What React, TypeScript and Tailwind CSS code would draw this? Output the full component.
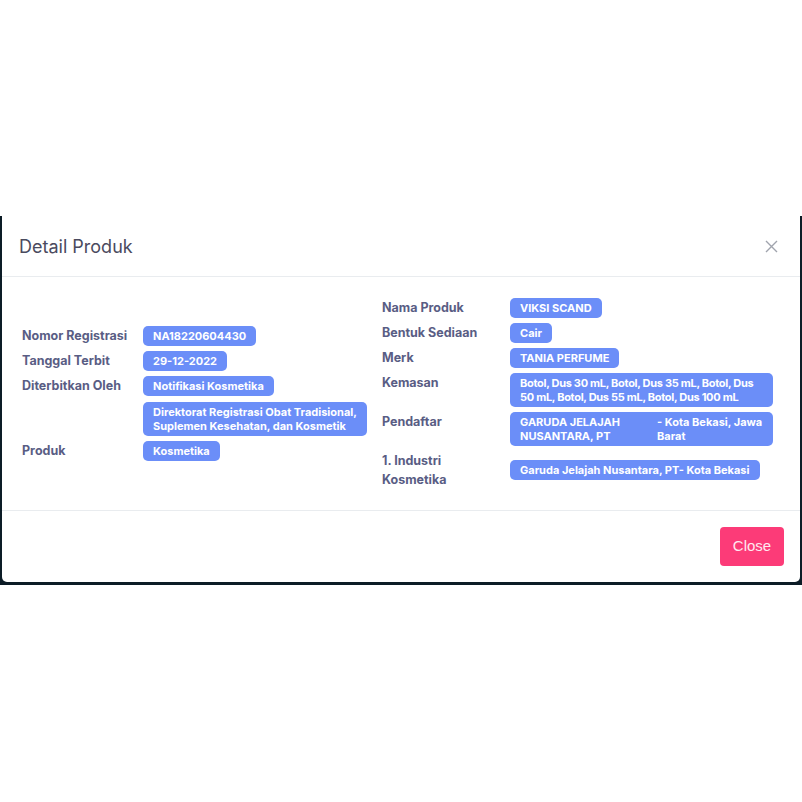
import React from 'react';

const badgeCls =
  'rounded-[5px] bg-[#6b8ef8] px-[10px] py-[3px] text-[11px] font-bold leading-[14px] text-white whitespace-nowrap';

const Badge: React.FC<{ children: React.ReactNode }> = ({ children }) => (
  <div className="flex self-center">
    <span className={badgeCls}>{children}</span>
  </div>
);

const Label: React.FC<{ children: React.ReactNode }> = ({ children }) => (
  <div className="self-start text-[12.5px] font-bold leading-[19px] text-[#595d84]">{children}</div>
);

export default function App() {
  return (
    <div className="min-h-[802px] w-[802px] bg-white font-['Inter',sans-serif]">
      <div className="h-[216px]" />
      <div className="bg-[#0c1c26] px-[2px] pb-[3px]">
        <div className="rounded-b-[5px] bg-white">
          {/* Header */}
          <div className="flex h-[61px] items-center justify-between border-b border-[#e9ecef] pl-[17px] pr-[22px]">
            <h3 className="text-[18px] font-normal text-[#4a4a5e]">Detail Produk</h3>
            <button className="text-[#a0a4ad]">
              <svg width="13" height="13" viewBox="0 0 13 13" fill="none" stroke="currentColor" strokeWidth="1.4">
                <path d="M1 1L12 12M12 1L1 12" />
              </svg>
            </button>
          </div>

          {/* Body */}
          <div className="flex items-center gap-[12px] border-b border-[#e9ecef] pb-[21px] pl-[20px] pr-[25px] pt-[21px]">
            <div className="grid w-[348px] grid-cols-[121px_1fr] gap-y-[5px]">
              <Label>Nomor Registrasi</Label>
              <Badge>NA18220604430</Badge>
              <Label>Tanggal Terbit</Label>
              <Badge>29-12-2022</Badge>
              <Label>Diterbitkan Oleh</Label>
              <div className="flex flex-col items-start gap-[6px]">
                <span className={badgeCls}>Notifikasi Kosmetika</span>
                <span className={badgeCls}>
                  Direktorat Registrasi Obat Tradisional,
                  <br />
                  Suplemen Kesehatan, dan Kosmetik
                </span>
              </div>
              <Label>Produk</Label>
              <Badge>Kosmetika</Badge>
            </div>

            <div className="grid flex-1 grid-cols-[128px_1fr] gap-y-[5px]">
              <Label>Nama Produk</Label>
              <Badge>VIKSI SCAND</Badge>
              <Label>Bentuk Sediaan</Label>
              <Badge>Cair</Badge>
              <Label>Merk</Label>
              <Badge>TANIA PERFUME</Badge>
              <Label>Kemasan</Label>
              <div className="flex self-center">
                <span className={`${badgeCls} w-[263px] tracking-[-0.3px]`}>
                  Botol, Dus 30 mL, Botol, Dus 35 mL, Botol, Dus
                  <br />
                  50 mL, Botol, Dus 55 mL, Botol, Dus 100 mL
                </span>
              </div>
              <Label>Pendaftar</Label>
              <div className="flex self-center">
                <div className={`${badgeCls} flex w-[263px]`}>
                  <span className="w-[137px] shrink-0">
                    GARUDA JELAJAH
                    <br />
                    NUSANTARA, PT
                  </span>
                  <span>
                    - Kota Bekasi, Jawa
                    <br />
                    Barat
                  </span>
                </div>
              </div>
              <Label>
                1. Industri
                <br />
                Kosmetika
              </Label>
              <Badge>Garuda Jelajah Nusantara, PT- Kota Bekasi</Badge>
            </div>
          </div>

          {/* Footer */}
          <div className="flex justify-end px-[16px] pb-[16px] pt-[16px]">
            <button className="h-[39px] w-[64px] rounded-[4px] bg-[#fc3b78] font-['Liberation_Sans',sans-serif] text-[15px] text-[#ffe9f0]">
              Close
            </button>
          </div>
        </div>
      </div>
    </div>
  );
}
